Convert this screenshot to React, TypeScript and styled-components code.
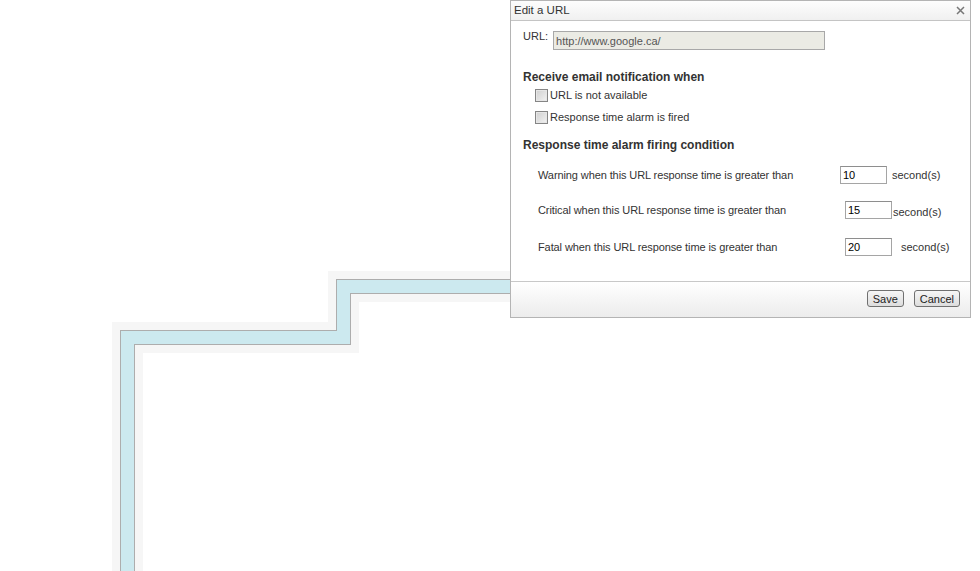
import React from "react";
import styled, { createGlobalStyle } from "styled-components";

const Global = createGlobalStyle`
  html, body { margin: 0; padding: 0; background: #ffffff; overflow: hidden; }
  body { font-family: "Liberation Sans", Arial, sans-serif; font-size: 11px; color: #333; }
`;

const Page = styled.div`
  position: relative;
  width: 980px;
  height: 571px;
  background: #ffffff;
`;

const Diagram = styled.svg`
  display: block;
`;

const Dialog = styled.div`
  position: absolute;
  left: 510px;
  top: 0;
  width: 459px;
  border: 1px solid #b4b4b4;
  background: #ffffff;
  display: flex;
  flex-direction: column;
`;

const TitleBar = styled.div`
  height: 19px;
  flex: none;
  border-bottom: 1px solid #c4c4c4;
  background: linear-gradient(#fdfdfd, #f0f0f0);
  display: flex;
  align-items: center;
  justify-content: space-between;
  padding: 0 4px 0 3px;
`;

const Title = styled.span`
  font-size: 11.5px;
  color: #333;
  line-height: 19px;
`;

const CloseButton = styled.button`
  border: 0;
  background: transparent;
  padding: 0;
  width: 12px;
  height: 12px;
  display: flex;
  align-items: center;
  justify-content: center;
  cursor: pointer;
`;

const Body = styled.div`
  height: 251px;
  flex: none;
  padding: 9px 12px 0 12px;
  display: flex;
  flex-direction: column;
`;

const UrlRow = styled.div`
  display: flex;
  align-items: flex-start;
  gap: 5px;
`;

const Label = styled.span`
  line-height: 13px;
  color: #333;
`;

const UrlInput = styled.input`
  margin-top: 1px;
  width: 272px;
  height: 19px;
  box-sizing: border-box;
  border: 1px solid #a8a8a8;
  background: #ebebe4;
  color: #555;
  font: 11px "Liberation Sans", Arial, sans-serif;
  padding: 0 2px;
  outline: none;
`;

const Heading = styled.div<{ $top: number }>`
  margin-top: ${(p) => p.$top}px;
  font-weight: bold;
  font-size: 12px;
  line-height: 14px;
  color: #333;
`;

const CheckRow = styled.label<{ $top: number }>`
  margin-top: ${(p) => p.$top}px;
  margin-left: 12px;
  display: flex;
  align-items: center;
  gap: 2px;
  height: 13px;
  line-height: 13px;
  color: #333;
`;

const Check = styled.input`
  appearance: none;
  margin: 0;
  width: 13px;
  height: 13px;
  box-sizing: border-box;
  border: 1px solid #858585;
  background: linear-gradient(135deg, #cfcfcf, #f2f2f2);
  box-shadow: inset 0 0 0 1px #e6e6e6;
`;

const CondRow = styled.div<{ $top: number }>`
  margin-top: ${(p) => p.$top}px;
  margin-left: 15px;
  display: flex;
  align-items: center;
  height: 18px;
`;

const CondLabel = styled.span<{ $width: number }>`
  width: ${(p) => p.$width}px;
  flex: none;
  line-height: 13px;
  letter-spacing: -0.1px;
  color: #333;
`;

const NumInput = styled.input`
  width: 47px;
  height: 18px;
  box-sizing: border-box;
  border: 1px solid #a5a5a5;
  border-top-color: #8e8e8e;
  background: #fff;
  color: #000;
  font: 11px "Liberation Sans", Arial, sans-serif;
  padding: 0 2px;
  outline: none;
`;

const Unit = styled.span<{ $gap: number; $self: string }>`
  margin-left: ${(p) => p.$gap}px;
  align-self: ${(p) => p.$self};
  line-height: 13px;
  color: #333;
`;

const Footer = styled.div`
  height: 36px;
  flex: none;
  border-top: 1px solid #c8c8c8;
  background: linear-gradient(#ffffff, #ececec);
  display: flex;
  align-items: center;
  justify-content: flex-end;
  gap: 10px;
  padding: 0 10px 2px 0;
  box-sizing: border-box;
`;

const Button = styled.button`
  height: 17px;
  box-sizing: border-box;
  padding: 0 5px;
  border: 1px solid #707070;
  border-radius: 3px;
  background: linear-gradient(#f6f6f6, #dddddd);
  color: #222;
  font: 11px "Liberation Sans", Arial, sans-serif;
  line-height: 14px;
  cursor: pointer;
`;

const conditions = [
  { label: "Warning when this URL response time is greater than", width: 302, value: "10", gap: 5, self: "center", top: 14 },
  { label: "Critical when this URL response time is greater than", width: 307, value: "15", gap: 1, self: "flex-end", top: 17 },
  { label: "Fatal when this URL response time is greater than", width: 307, value: "20", gap: 9, self: "center", top: 19 },
];

const path = "M127.5 571 V337.5 H343.5 V286.5 H560";

export default function App() {
  return (
    <Page>
      <Global />
      <Diagram width="980" height="571" viewBox="0 0 980 571">
        <path d={path} fill="none" stroke="#f6f6f6" strokeWidth="31" strokeLinejoin="miter" />
        <path d={path} fill="none" stroke="#adadad" strokeWidth="15" strokeLinejoin="miter" />
        <path d={path} fill="none" stroke="#cce9ef" strokeWidth="13" strokeLinejoin="miter" />
      </Diagram>
      <Dialog>
        <TitleBar>
          <Title>Edit a URL</Title>
          <CloseButton aria-label="Close">
            <svg width="9" height="9" viewBox="0 0 9 9">
              <path d="M1 1 L8 8 M8 1 L1 8" stroke="#777" strokeWidth="1.5" />
            </svg>
          </CloseButton>
        </TitleBar>
        <Body>
          <UrlRow>
            <Label>URL:</Label>
            <UrlInput value="http://www.google.ca/" readOnly />
          </UrlRow>
          <Heading $top={20}>Receive email notification when</Heading>
          <CheckRow $top={5}>
            <Check type="checkbox" />
            URL is not available
          </CheckRow>
          <CheckRow $top={9}>
            <Check type="checkbox" />
            Response time alarm is fired
          </CheckRow>
          <Heading $top={14}>Response time alarm firing condition</Heading>
          {conditions.map((c) => (
            <CondRow key={c.value} $top={c.top}>
              <CondLabel $width={c.width}>{c.label}</CondLabel>
              <NumInput defaultValue={c.value} />
              <Unit $gap={c.gap} $self={c.self}>second(s)</Unit>
            </CondRow>
          ))}
        </Body>
        <Footer>
          <Button>Save</Button>
          <Button>Cancel</Button>
        </Footer>
      </Dialog>
    </Page>
  );
}
